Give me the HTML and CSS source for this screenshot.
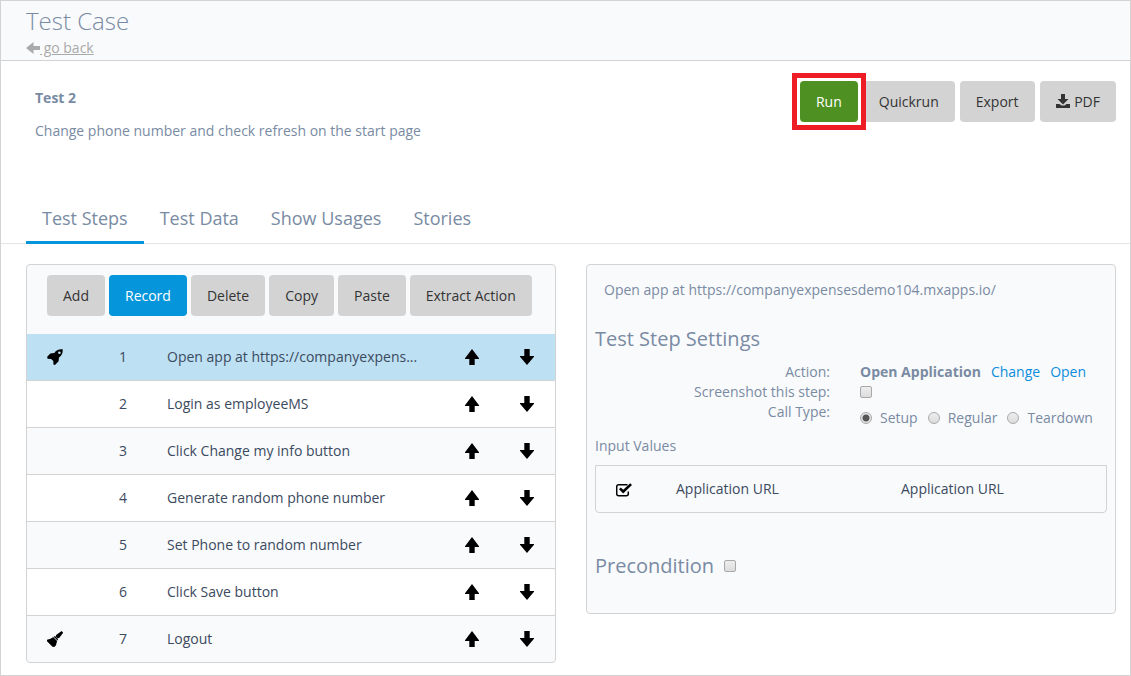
FILE: index.html
```html
<!DOCTYPE html>
<html lang="en">
<head>
<meta charset="utf-8">
<title>Test Case</title>
<link rel="stylesheet" href="styles.css">
</head>
<body>
<svg class="sprite" aria-hidden="true">
  <symbol id="up" viewBox="0 0 14 16"><path d="M7 0 14 9.3V10H9.7v6H4.3v-6H0v-.7z"/></symbol>
  <symbol id="down" viewBox="0 0 14 16"><path d="M7 16 14 7.7V7H9.7V0H4.3v7H0v.7z"/></symbol>
  <symbol id="back" viewBox="0 0 14 12"><path d="M0 6 7.5 0v4H14v4H7.500v4z"/></symbol>
  <symbol id="download" viewBox="0 0 14 14"><path d="M5 0h4v5h3.500L7 10.500 1.500 5H5zM0 10h3.500l2 1.500h3l2-1.500H14v4H0z"/></symbol>
  <symbol id="rocket" viewBox="0 0 16 16"><path fill-rule="evenodd" d="M15.700.2C11.500-.1 9.300 1 7.300 3.900L3.300 4.400.2 7.800l.3 2 3.600.1 2.200 2.200.1 3.400 1.600.4 3.600-3.700.4-3.600C14.500 6.700 16 4.300 15.700.2zM12.400 2.400a1.300 1.300 0 1 1 0 2.600 1.300 1.300 0 0 1 0-2.600z"/></symbol>
  <symbol id="brush" viewBox="0 0 16 16"><path d="M14.600 0 16.200 1.600 12.200 7.100 10.700 7.300 8.900 5.500 9.100 4zM8.500 5.600l2 2c.6.600.5 1.300 0 1.800L6.700 5.700c.5-.5 1.200-.6 1.800-.1zM6.100 6.100l4 4-1.100 4.200L7.300 16 5.500 15.800 0 10.300 0 8.700C2.700 8.600 4.500 7.600 6.100 6.100z"/></symbol>
  <symbol id="check" viewBox="0 0 16 14"><path fill="none" stroke="#000" stroke-width="1.500" d="M11.500 1.700H2.700q-2 0-2 2v7q0 2 2 2h7.600q2 0 2-2V8.500"/><path d="M3 6.200 4.800 4.400 7.200 6.800 14.200.2 16 2 7.200 10.600z"/></symbol>
</svg>
<div class="page">
  <header class="header">
    <h1 class="title">Test Case</h1>
    <a class="back" href="#"><svg class="back-icon"><use href="#back"/></svg>&nbsp;go back</a>
  </header>
  <section class="summary">
    <div class="about">
      <h2 class="name">Test 2</h2>
      <p class="text">Change phone number and check refresh on the start page</p>
    </div>
    <div class="actions">
      <button class="btn run" type="button">Run</button>
      <button class="btn" type="button">Quickrun</button>
      <button class="btn" type="button">Export</button>
      <button class="btn" type="button"><svg class="download-icon"><use href="#download"/></svg> PDF</button>
    </div>
  </section>
  <nav class="tabs">
    <a class="tab active" href="#">Test Steps</a>
    <a class="tab" href="#">Test Data</a>
    <a class="tab" href="#">Show Usages</a>
    <a class="tab" href="#">Stories</a>
  </nav>
  <main class="panels">
    <section class="panel">
      <div class="toolbar">
        <button class="btn" type="button">Add</button>
        <button class="btn primary" type="button">Record</button>
        <button class="btn" type="button">Delete</button>
        <button class="btn" type="button">Copy</button>
        <button class="btn" type="button">Paste</button>
        <button class="btn" type="button">Extract Action</button>
      </div>
      <table class="steps">
        <colgroup><col class="col-icon"><col class="col-number"><col><col class="col-move"><col class="col-move"></colgroup>
        <tbody>
        <tr class="selected"><td class="mark"><svg class="icon"><use href="#rocket"/></svg></td><td class="mark">1</td><td class="step">Open app at https://companyexpens...</td><td class="mark"><button class="move" type="button" aria-label="Move up"><svg class="arrow"><use href="#up"/></svg></button></td><td class="mark"><button class="move" type="button" aria-label="Move down"><svg class="arrow"><use href="#down"/></svg></button></td></tr>
        <tr><td></td><td class="mark">2</td><td class="step">Login as employeeMS</td><td class="mark"><button class="move" type="button" aria-label="Move up"><svg class="arrow"><use href="#up"/></svg></button></td><td class="mark"><button class="move" type="button" aria-label="Move down"><svg class="arrow"><use href="#down"/></svg></button></td></tr>
        <tr><td></td><td class="mark">3</td><td class="step">Click Change my info button</td><td class="mark"><button class="move" type="button" aria-label="Move up"><svg class="arrow"><use href="#up"/></svg></button></td><td class="mark"><button class="move" type="button" aria-label="Move down"><svg class="arrow"><use href="#down"/></svg></button></td></tr>
        <tr><td></td><td class="mark">4</td><td class="step">Generate random phone number</td><td class="mark"><button class="move" type="button" aria-label="Move up"><svg class="arrow"><use href="#up"/></svg></button></td><td class="mark"><button class="move" type="button" aria-label="Move down"><svg class="arrow"><use href="#down"/></svg></button></td></tr>
        <tr><td></td><td class="mark">5</td><td class="step">Set Phone to random number</td><td class="mark"><button class="move" type="button" aria-label="Move up"><svg class="arrow"><use href="#up"/></svg></button></td><td class="mark"><button class="move" type="button" aria-label="Move down"><svg class="arrow"><use href="#down"/></svg></button></td></tr>
        <tr><td></td><td class="mark">6</td><td class="step">Click Save button</td><td class="mark"><button class="move" type="button" aria-label="Move up"><svg class="arrow"><use href="#up"/></svg></button></td><td class="mark"><button class="move" type="button" aria-label="Move down"><svg class="arrow"><use href="#down"/></svg></button></td></tr>
        <tr><td class="mark"><svg class="icon"><use href="#brush"/></svg></td><td class="mark">7</td><td class="step">Logout</td><td class="mark"><button class="move" type="button" aria-label="Move up"><svg class="arrow"><use href="#up"/></svg></button></td><td class="mark"><button class="move" type="button" aria-label="Move down"><svg class="arrow"><use href="#down"/></svg></button></td></tr>
        </tbody>
      </table>
    </section>
    <section class="panel details">
      <p class="description">Open app at https://companyexpensesdemo104.mxapps.io/</p>
      <h3 class="heading">Test Step Settings</h3>
      <div class="settings">
        <span class="label">Action:</span>
        <div class="value"><strong>Open Application</strong><a class="link" href="#">Change</a><a class="link" href="#">Open</a></div>
        <label class="label" for="screenshot">Screenshot this step:</label>
        <div class="value"><input class="tick" type="checkbox" id="screenshot"></div>
        <span class="label" id="call-type">Call Type:</span>
        <div class="value choices" role="radiogroup" aria-labelledby="call-type">
          <label class="choice"><input class="tick radio" type="radio" name="call" checked>Setup</label>
          <label class="choice"><input class="tick radio" type="radio" name="call">Regular</label>
          <label class="choice"><input class="tick radio" type="radio" name="call">Teardown</label>
        </div>
      </div>
      <h4 class="subheading">Input Values</h4>
      <table class="inputs">
        <colgroup><col class="col-check"><col class="col-name"><col></colgroup>
        <tbody><tr><td class="mark"><svg class="check-icon"><use href="#check"/></svg></td><td>Application URL</td><td>Application URL</td></tr></tbody>
      </table>
      <label class="heading precondition">Precondition <input class="tick" type="checkbox"></label>
    </section>
  </main>
</div>
</body>
</html>
```

FILE: styles.css
```css
* {
  box-sizing: border-box;
}

body {
  margin: 0;
  background: #fff;
  color: #798ba3;
  font: 14px/20px "Open Sans", sans-serif;
}

h1, h2, h3, h4, p {
  margin: 0;
}

a {
  text-decoration: none;
}

.sprite {
  display: none;
}

.page {
  min-height: 100vh;
  border: 1px solid #d3d3d3;
}

.header {
  padding: 2px 25px;
  border-bottom: 1px solid #d3d3d3;
  background: #f9fafc;
}

.title {
  font-size: 24px;
  font-weight: 300;
  line-height: 35px;
}

.back {
  display: block;
  color: #aaa;
  text-decoration: underline;
}

.back-icon {
  width: 14px;
  height: 12px;
  fill: #aaa;
  vertical-align: -1px;
}

.summary {
  display: flex;
  justify-content: space-between;
  align-items: flex-start;
  padding: 20px 14px 53px 34px;
}

.about {
  padding-top: 7px;
}

.name {
  margin-bottom: 13px;
  font-size: 14px;
  font-weight: 700;
}

.actions {
  display: flex;
  gap: 5px;
}

.btn {
  padding: 11px 16px 10px;
  border: 0;
  border-radius: 4px;
  background: #d3d3d3;
  color: #333;
  font: inherit;
  white-space: nowrap;
}

.run {
  position: relative;
  background: #4f9022;
  color: #fff;
}

.run::after {
  content: "";
  position: absolute;
  inset: -8px;
  border: 5px solid #ee1c25;
}

.download-icon {
  width: 14px;
  height: 14px;
  margin-right: 1px;
  fill: #333;
  vertical-align: -1px;
}

.tabs {
  display: flex;
  padding: 0 25px;
  border-bottom: 1px solid #e6e6e6;
}

.tab {
  margin-bottom: -1px;
  padding: 12px 16px 11px;
  border-bottom: 3px solid transparent;
  color: #798ba3;
  font-size: 18px;
  line-height: 24px;
}

.active {
  border-color: #0595db;
}

.panels {
  display: grid;
  grid-template-columns: 1fr 1fr;
  align-items: start;
  gap: 30px;
  padding: 20px 14px 12px 25px;
}

.panel {
  overflow: hidden;
  border: 1px solid #d3d3d3;
  border-radius: 4px;
  background: #f9fafc;
}

.toolbar {
  display: flex;
  gap: 4px;
  padding: 10px 20px 18px;
}

.primary {
  background: #0595db;
  color: #fff;
}

table {
  width: 100%;
  table-layout: fixed;
  border-spacing: 0;
  color: #3b4a60;
}

td {
  height: 46px;
  padding: 0;
}

.steps tr:nth-child(even) {
  background: #fff;
}

.steps .selected {
  background: #bde0f2;
}

.steps tr + tr td {
  height: 47px;
  border-top: 1px solid #d3d3d3;
}

.col-icon {
  width: 56px;
}

.col-number {
  width: 80px;
}

.col-move {
  width: 55px;
}

.mark {
  text-align: center;
}

.step {
  padding: 0 24px 0 4px;
  overflow: hidden;
  text-overflow: ellipsis;
  white-space: nowrap;
}

.icon {
  display: block;
  width: 16px;
  height: 16px;
  margin: 0 auto;
}

.move {
  padding: 4px 2px 0 0;
  border: 0;
  background: none;
}

.arrow {
  display: block;
  width: 14px;
  height: 16px;
}

.details {
  padding: 15px 8px 33px;
}

.description {
  padding-left: 9px;
}

.heading {
  margin-top: 25px;
  font-size: 20px;
  font-weight: 400;
  line-height: 28px;
}

.settings {
  display: grid;
  grid-template-columns: 235px 1fr;
  column-gap: 30px;
  margin-top: 9px;
}

.label {
  text-align: right;
}

.value {
  display: flex;
  align-items: center;
  gap: 10px;
  white-space: nowrap;
}

.link {
  color: #0c8ddd;
}

.tick {
  appearance: none;
  width: 12px;
  height: 12px;
  margin: 0;
  border: 1px solid #a9a9a9;
  border-radius: 2px;
  background: linear-gradient(#eee, #dcdcdc);
}

.radio {
  border-radius: 50%;
}

.radio:checked {
  background: radial-gradient(circle, #555 3px, #e6e6e6 4px);
}

.choices {
  padding-top: 6px;
}

.choice {
  display: flex;
  align-items: center;
  gap: 8px;
}

.subheading {
  margin: 8px 0 9px;
  font-size: 14px;
  font-weight: 400;
}

.inputs {
  border: 1px solid #d3d3d3;
  border-radius: 0 0 4px 4px;
}

.col-check {
  width: 80px;
}

.col-name {
  width: 225px;
}

.inputs .mark {
  padding-right: 24px;
}

.check-icon {
  display: block;
  width: 16px;
  height: 14px;
  margin: 2px auto 0;
}

.precondition {
  display: flex;
  align-items: center;
  gap: 10px;
  margin-top: 39px;
}
```
